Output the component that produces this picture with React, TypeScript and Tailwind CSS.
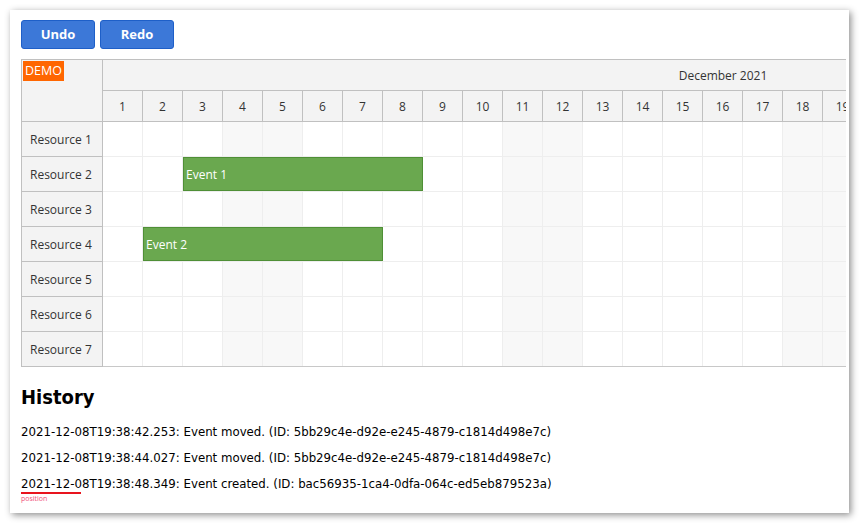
import React from "react";

const days = Array.from({ length: 31 }, (_, i) => i + 1);
const weekend = (d: number) => {
  // Dec 1 2021 = Wednesday (0 = Mon)
  const dow = (d + 1) % 7;
  return dow === 5 || dow === 6;
};
const resources = [1, 2, 3, 4, 5, 6, 7].map((n) => `Resource ${n}`);
const events: Record<number, { label: string; start: number; len: number }> = {
  1: { label: "Event 1", start: 3, len: 6 },
  3: { label: "Event 2", start: 2, len: 6 },
};

const gridFont = { fontFamily: '"Open Sans", "Noto Sans", sans-serif' };
const histFont = { fontFamily: '"DejaVu Sans Condensed", "Liberation Sans", sans-serif' };

export default function App() {
  return (
    <div className="w-[860px] h-[524px] bg-white pt-[10px] pl-[10px]">
      <div className="w-[839px] h-[503px] bg-white shadow-[2px_2px_7px_rgba(0,0,0,0.45)] pt-[10px] pl-[11px]">
        <div className="flex gap-[5px]" style={gridFont}>
          <button className="w-[74px] h-[29px] bg-[#3c78d8] border border-[#1e5fc8] rounded-[3px] text-white font-bold text-[13px]">
            Undo
          </button>
          <button className="w-[74px] h-[29px] bg-[#3c78d8] border border-[#1e5fc8] rounded-[3px] text-white font-bold text-[13px]">
            Redo
          </button>
        </div>

        <div
          className="mt-[10px] w-[825px] flex border-t border-l border-[#c0c0c0] overflow-hidden text-[12px] text-[#333]"
          style={gridFont}
        >
          <div className="w-[81px] shrink-0 border-r border-[#c0c0c0] bg-[#f3f3f3]">
            <div className="h-[62px] border-b border-[#c0c0c0] pt-[1px] pl-[1px]">
              <span className="inline-block bg-[#ff6600] text-white text-[12.5px] leading-[20px] px-[2px]">DEMO</span>
            </div>
            {resources.map((r) => (
              <div key={r} className="h-[35px] border-b border-[#c0c0c0] flex items-center pl-[8px] pt-[1px]">
                {r}
              </div>
            ))}
          </div>
          <div className="flex-1 overflow-hidden">
            <div className="w-[1240px] h-[31px] bg-[#f3f3f3] border-b border-[#c0c0c0] flex items-center justify-center pt-[1px]">
              December 2021
            </div>
            <div className="flex w-[1240px] h-[31px] bg-[#f3f3f3] border-b border-[#c0c0c0]">
              {days.map((d) => (
                <div key={d} className="w-[40px] shrink-0 border-r border-[#c0c0c0] flex items-center justify-center pt-[1px]">
                  {d}
                </div>
              ))}
            </div>
            {resources.map((r, i) => (
              <div
                key={r}
                className={`relative flex w-[1240px] h-[35px] border-b ${i === 6 ? "border-[#c8c8c8]" : "border-[#eeeeee]"}`}
              >
                {days.map((d) => (
                  <div
                    key={d}
                    className={`w-[40px] shrink-0 border-r border-[#eeeeee] ${weekend(d) ? "bg-[#f8f8f8]" : "bg-white"}`}
                  />
                ))}
                {events[i] && (
                  <div
                    className="absolute top-0 h-[34px] w-[240px] bg-[#6aa84f] border border-[#4f8f36] text-white flex items-center pl-[2px] pt-[1px]"
                    style={{ left: (events[i].start - 1) * 40 }}
                  >
                    {events[i].label}
                  </div>
                )}
              </div>
            ))}
          </div>
        </div>

        <div style={histFont} className="text-black">
          <h2 className="mt-[18px] text-[20px] leading-[24px] font-bold">History</h2>
          <div className="mt-[10px] text-[13.1px] leading-[26px]">
            <div>2021-12-08T19:38:42.253: Event moved. (ID: 5bb29c4e-d92e-e245-4879-c1814d498e7c)</div>
            <div>2021-12-08T19:38:44.027: Event moved. (ID: 5bb29c4e-d92e-e245-4879-c1814d498e7c)</div>
            <div className="relative">
              2021-12-08T19:38:48.349: Event created. (ID: bac56935-1ca4-0dfa-064c-ed5eb879523a)
              <div className="absolute left-0 top-[21px] w-[60px] h-[2px] bg-[#e8141e]" />
              <div
                className="absolute left-0 top-[24px] text-[7px] leading-[8px] text-[#f0507a]"
                style={gridFont}
              >
                position
              </div>
            </div>
          </div>
        </div>
      </div>
    </div>
  );
}
